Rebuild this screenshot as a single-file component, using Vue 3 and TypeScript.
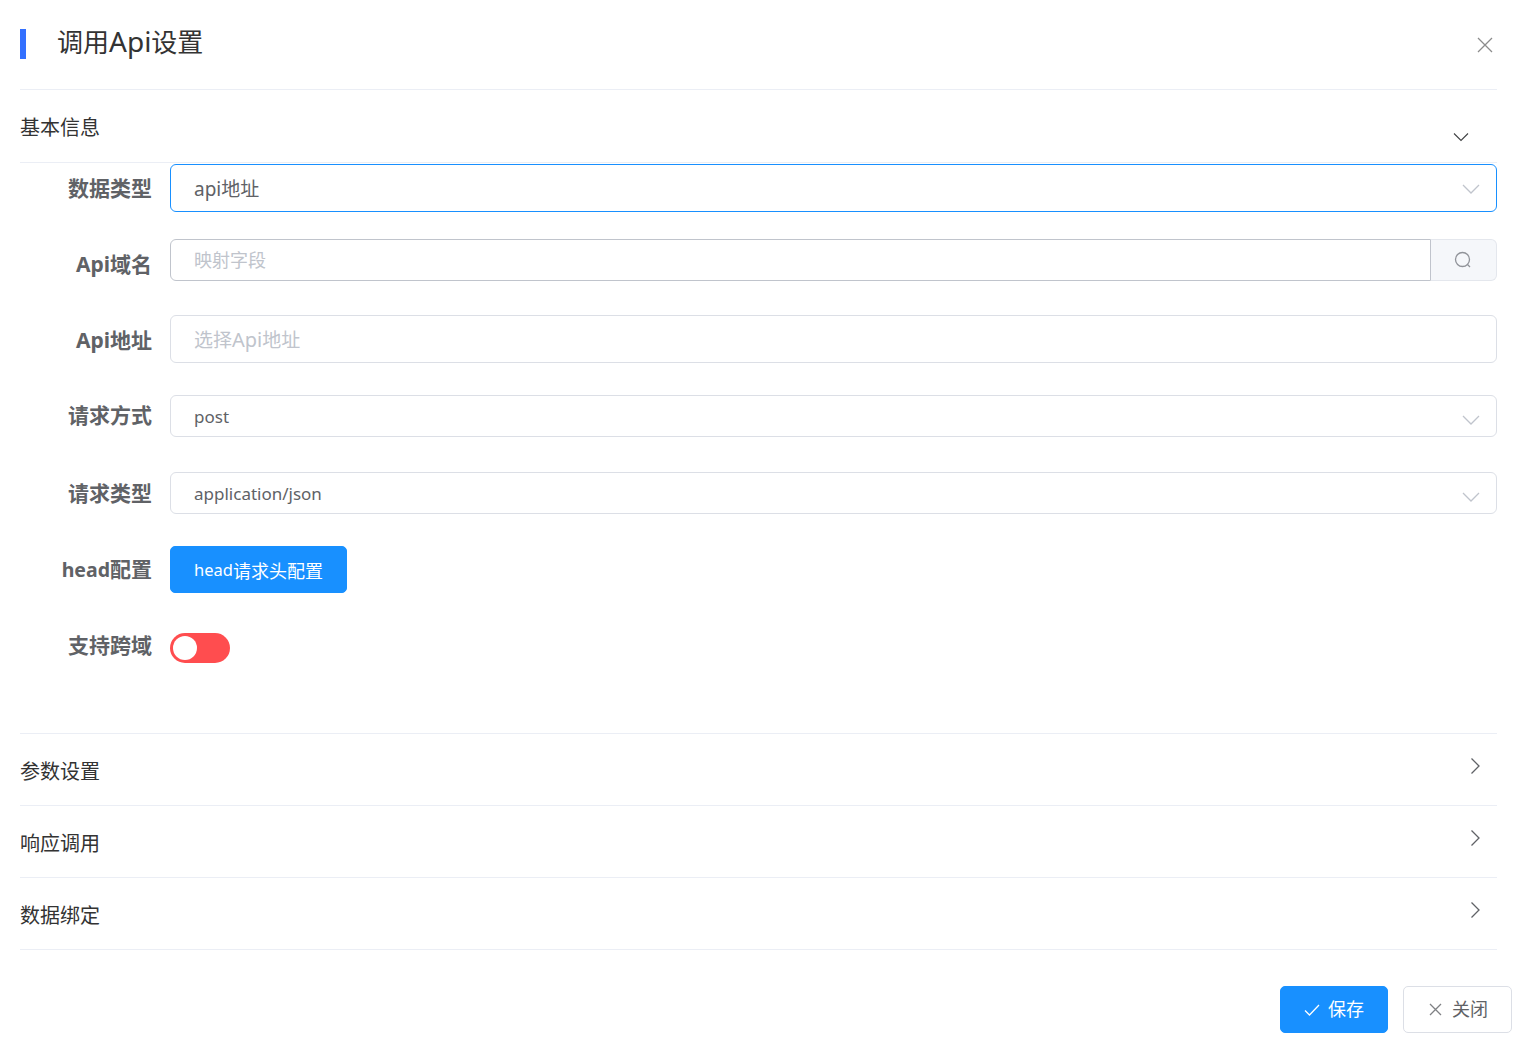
<script setup lang="ts">
const collapsed: string[] = ['参数设置', '响应调用', '数据绑定']
</script>

<template>
  <div class="page">
    <div class="content">
      <header class="head">
        <i class="accent"></i>
        <h1 class="title">调用<span class="api-title">Api</span>设置</h1>
        <svg class="close" width="16" height="16" viewBox="0 0 16 16"><path d="M1 1l14 14M15 1L1 15" /></svg>
      </header>

      <div class="section open">
        <span class="section-name">基本信息</span>
        <svg class="chev-down" width="16" height="10" viewBox="0 0 16 10"><path d="M1 1.5l7 7 7-7" /></svg>
      </div>

      <form class="form" @submit.prevent>
        <div class="row r1">
          <label class="label">数据类型</label>
          <div class="box focus h48"><span class="big">api地址</span>
            <svg class="arrow" width="18" height="10" viewBox="0 0 18 10"><path d="M1 1l8 8 8-8" /></svg>
          </div>
        </div>
        <div class="row r2">
          <label class="label shift-8">Api域名</label>
          <div class="group">
            <div class="box dark h42 joined"><span class="ph ph-up">映射字段</span></div>
            <div class="append">
              <svg width="18" height="18" viewBox="0 0 18 18"><circle cx="8.5" cy="8.5" r="7" /><path d="M13.5 13.5l2.5 2.5" /></svg>
            </div>
          </div>
        </div>
        <div class="row r3">
          <label class="label shift-2">Api地址</label>
          <div class="box h48"><span class="ph big">选择<span class="api-ph">Api</span>地址</span></div>
        </div>
        <div class="row r4">
          <label class="label shift-up-2">请求方式</label>
          <div class="box h42"><span class="small">post</span>
            <svg class="arrow low" width="18" height="10" viewBox="0 0 18 10"><path d="M1 1l8 8 8-8" /></svg>
          </div>
        </div>
        <div class="row r5">
          <label class="label">请求类型</label>
          <div class="box h42"><span class="small">application/json</span>
            <svg class="arrow low" width="18" height="10" viewBox="0 0 18 10"><path d="M1 1l8 8 8-8" /></svg>
          </div>
        </div>
        <div class="row r6">
          <label class="label"><span class="head-latin">head</span>配置</label>
          <button type="button" class="btn primary head-btn"><span class="head-small">head</span>请求头配置</button>
        </div>
        <div class="row r7">
          <label class="label shift-up-6">支持跨域</label>
          <span class="switch"><i class="knob"></i></span>
        </div>
      </form>

      <div v-for="name in collapsed" :key="name" class="section closed">
        <span class="section-name">{{ name }}</span>
        <svg class="chev-right" width="10" height="18" viewBox="0 0 10 18"><path d="M1.5 1.5l7.5 7.5-7.5 7.5" /></svg>
      </div>
    </div>

    <footer class="foot">
      <button type="button" class="btn primary foot-btn">
        <svg width="16" height="12" viewBox="0 0 16 12"><path d="M1 6.5l4.5 4.5L15 1" /></svg>
        <span class="foot-text">保存</span>
      </button>
      <button type="button" class="btn plain foot-btn">
        <svg width="13" height="13" viewBox="0 0 13 13"><path d="M1 1l11 11M12 1L1 12" /></svg>
        <span class="foot-text">关闭</span>
      </button>
    </footer>
  </div>
</template>

<style scoped>
.page {
  width: 1523px;
  height: 1044px;
  box-sizing: border-box;
  padding: 0 11px 0 20px;
  background: #fff;
  color: #303133;
  font-family: "Noto Sans", "Noto Sans CJK SC", sans-serif;
  overflow: hidden;
}
.content { margin-right: 15px; }
svg { fill: none; stroke: currentColor; stroke-width: 1.3; flex: none; }

.head {
  display: flex;
  align-items: center;
  height: 89px;
  border-bottom: 1px solid #ebeef5;
  box-sizing: content-box;
}
.accent { width: 6px; height: 30px; background: #3370ff; margin-right: 31px; margin-top: -1px; }
.title { margin: -8px 0 0; font-size: 26px; font-weight: 400; color: #333; flex: 1; }
.api-title { font-size: 28px; }
.close { color: #8c8c8c; margin: 0 4px 0 0; }

.section {
  display: flex;
  justify-content: space-between;
  height: 71px;
  border-bottom: 1px solid #ebeef5;
}
.section.open { height: 72px; }
.section-name { font-size: 20px; line-height: 76px; color: #333; }
.chev-down { color: #404244; stroke-width: 1.1; margin: 42px 28px 0 0; }
.chev-right { color: #606266; margin: 23px 17px 0 0; }

.form { padding-bottom: 67px; border-bottom: 1px solid #ebeef5; margin-top: 1px; }
.row { display: flex; align-items: center; }
.r1 { margin-bottom: 27px; }
.r2 { margin-bottom: 34px; }
.r3 { margin-bottom: 32px; }
.r4 { margin-bottom: 35px; }
.r5 { margin-bottom: 32px; }
.r6 { margin-bottom: 37px; }
.label {
  width: 132px;
  margin-right: 18px;
  flex: none;
  text-align: right;
  font-size: 21px;
  line-height: 30px;
  font-weight: 700;
  color: #606266;
  box-sizing: border-box;
}
.shift-8 { padding-top: 8px; }
.shift-2 { padding-top: 2px; }
.shift-up-2 { padding-bottom: 2px; }
.shift-up-6 { padding-bottom: 6px; }
.head-latin { font-size: 19.5px; }

.box {
  flex: 1;
  min-width: 0;
  display: flex;
  align-items: center;
  justify-content: space-between;
  box-sizing: border-box;
  border: 1px solid #dcdfe6;
  border-radius: 6px;
  padding: 0 16px 0 23px;
  font-size: 18px;
  color: #606266;
}
.h48 { height: 48px; }
.h42 { height: 42px; }
.focus { border-color: #1890ff; }
.dark { border-color: #c0c4cc; }
.joined { border-radius: 6px 0 0 6px; }
.small { font-size: 17px; }
.big { font-size: 19px; }
.ph { color: #c0c4cc; }
.ph-up { margin-top: -3px; }
.api-ph { font-size: 20px; }
.arrow { color: #c0c4cc; margin-top: 2px; }
.arrow.low { margin-top: 8px; }

.group { flex: 1; min-width: 0; display: flex; }
.append {
  width: 66px;
  height: 42px;
  box-sizing: border-box;
  flex: none;
  display: flex;
  align-items: center;
  justify-content: center;
  background: #f5f7fa;
  border: 1px solid #e4e7ed;
  border-left: 0;
  border-radius: 0 6px 6px 0;
  color: #909399;
  padding-right: 1px;
}

.btn {
  font-family: inherit;
  font-size: 18px;
  border-radius: 5px;
  cursor: pointer;
  box-sizing: border-box;
  display: inline-flex;
  align-items: center;
  justify-content: center;
  padding: 0;
}
.primary { background: #1890ff; color: #fff; border: 1px solid #1890ff; }
.plain { background: #fff; color: #606266; border: 1px solid #dcdfe6; }
.head-btn { width: 177px; height: 47px; }
.head-small { font-size: 16.5px; }

.switch {
  width: 60px;
  height: 30px;
  border-radius: 15px;
  background: #ff4d4f;
  display: flex;
  align-items: center;
  padding-left: 3px;
  box-sizing: border-box;
}
.knob { width: 24px; height: 24px; border-radius: 50%; background: #fff; }

.foot {
  display: flex;
  justify-content: flex-end;
  gap: 15px;
  margin-top: 36px;
}
.foot-btn { height: 47px; gap: 8px; }
.foot-btn.primary { width: 108px; }
.foot-btn.plain { width: 109px; padding-left: 2px; }
.foot-btn.plain svg { color: #7f8184; margin-right: 2px; }
.foot-text { margin-top: -3px; }
</style>

<style>
html, body { margin: 0; background: #fff; }
</style>
